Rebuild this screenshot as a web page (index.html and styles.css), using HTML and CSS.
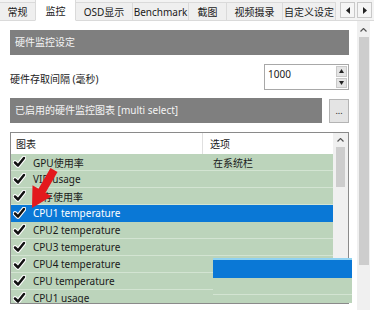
FILE: index.html
```html
<!DOCTYPE html>
<html>
<head>
<meta charset="utf-8">
<link rel="stylesheet" href="styles.css">
</head>
<body>
<div class="window">
  <div class="tabs">
    <div class="tab w35">常规</div>
    <div class="tab active w41">监控</div>
    <div class="tab w56">OSD显示</div>
    <div class="tab w56">Benchmark</div>
    <div class="tab w38">截图</div>
    <div class="tab w56">视频摄录</div>
    <div class="tab w54 last">自定义设定</div>
    <div class="tab-arrows">
      <div class="tab-arrow"><svg width="6" height="7" viewBox="0 0 6 7"><path d="M5 0 L1 3.5 L5 7 Z" fill="#222"/></svg></div>
      <div class="tab-arrow"><svg width="6" height="7" viewBox="0 0 6 7"><path d="M1 0 L5 3.5 L1 7 Z" fill="#222"/></svg></div>
    </div>
  </div>
  <div class="body">
    <div class="content">
      <div class="section-head">硬件监控设定</div>
      <div class="field-row">
        <div class="field-label">硬件存取间隔 (毫秒)</div>
        <div class="spin">
          <div class="spin-value">1000</div>
          <div class="spin-btns">
            <div class="spin-btn"><svg width="5" height="4" viewBox="0 0 5 4"><path d="M0 4 L2.5 0 L5 4 Z" fill="#222"/></svg></div>
            <div class="spin-btn"><svg width="5" height="4" viewBox="0 0 5 4"><path d="M0 0 L2.5 4 L5 0 Z" fill="#222"/></svg></div>
          </div>
        </div>
      </div>
      <div class="head-row">
        <div class="section-head grow">已启用的硬件监控图表 [multi select]</div>
        <div class="dots-btn">...</div>
      </div>
      <div class="list">
        <div class="list-main">
          <div class="list-head">
            <div class="col1">图表</div>
            <div class="col2">选项</div>
          </div>
          <div class="row"><span class="chk"></span><span class="col1">GPU使用率</span><span class="col2">在系统栏</span></div>
          <div class="row"><span class="chk"></span><span class="col1">VID usage</span></div>
          <div class="row"><span class="chk"></span><span class="col1">内存使用率</span></div>
          <div class="row sel"><span class="chk"></span><span class="col1">CPU1 temperature</span></div>
          <div class="row"><span class="chk"></span><span class="col1">CPU2 temperature</span></div>
          <div class="row"><span class="chk"></span><span class="col1">CPU3 temperature</span></div>
          <div class="row"><span class="chk"></span><span class="col1">CPU4 temperature</span></div>
          <div class="row"><span class="chk"></span><span class="col1">CPU temperature</span></div>
          <div class="row"><span class="chk"></span><span class="col1">CPU1 usage</span></div>
        </div>
        <div class="list-scroll">
          <div class="sb-arrow"><svg width="7" height="4" viewBox="0 0 7 4"><path d="M0.5 3.5 L3.5 0.5 L6.5 3.5" fill="none" stroke="#555" stroke-width="1.2"/></svg></div>
          <div class="sb-thumb small"></div>
        </div>
      </div>
    </div>
    <div class="outer-scroll">
      <div class="sb-arrow"><svg width="7" height="4" viewBox="0 0 7 4"><path d="M0.5 3.5 L3.5 0.5 L6.5 3.5" fill="none" stroke="#555" stroke-width="1.2"/></svg></div>
      <div class="sb-thumb big"></div>
    </div>
  </div>
  <div class="artifact">
    <div class="artifact-bar"></div>
    <div class="artifact-row"></div>
    <div class="artifact-row"></div>
  </div>
  <svg class="red-arrow" width="70" height="60" viewBox="0 160 70 60">
    <polygon points="57.5,172 50.5,168 38.5,188.7 32.5,185.2 32,208 51.5,196.2 45.5,192.7" fill="#e3191d"/>
  </svg>
</div>
</body>
</html>
```
FILE: styles.css
```css
* { box-sizing: border-box; }
html, body { margin: 0; padding: 0; background: #fff; }
body {
  font-family: "Noto Sans", "Noto Sans CJK SC", sans-serif;
  font-size: 10px;
  color: #1a1a1a;
}
.window {
  position: relative;
  width: 374px;
  height: 310px;
  overflow: hidden;
  background: #fff;
}
.tabs {
  display: flex;
  align-items: flex-end;
  height: 21px;
  background: #f3f3f3;
  border-bottom: 1px solid #dadada;
}
.tab {
  height: 19px;
  margin-bottom: -1px;
  border: 1px solid #dadada;
  border-right: none;
  background: #efefef;
  display: flex;
  align-items: center;
  justify-content: center;
  white-space: nowrap;
  font-size: 10px;
  color: #1a1a1a;
}
.tab.active {
  height: 22px;
  background: #fff;
  border-bottom: 1px solid #fff;
  border-right: 1px solid #dadada;
}
.tab.active + .tab { border-left: none; }
.tab.last { border-right: 1px solid #dadada; }
.w35 { width: 35px; border-left: none; }
.w41 { width: 41px; }
.w56 { width: 56px; }
.w38 { width: 38px; }
.w54 { width: 54px; }
.tab-arrows {
  display: flex;
  gap: 2px;
  margin-left: 4px;
  align-self: center;
}
.tab-arrow {
  width: 15px;
  height: 16px;
  border: 1px solid #c8c8c8;
  background: #f5f5f5;
  display: flex;
  align-items: center;
  justify-content: center;
}
.body {
  display: flex;
  height: 289px;
}
.content {
  width: 349px;
  padding-left: 10px;
  padding-top: 9px;
}
.section-head {
  height: 25px;
  background: #7f7f7f;
  color: #f4f4f4;
  padding-left: 5px;
  line-height: 25px;
  font-size: 10px;
}
.grow { flex: 1; }
.field-row {
  display: flex;
  align-items: center;
  justify-content: space-between;
  margin-top: 9px;
  height: 26px;
}
.field-label { font-size: 10px; padding-top: 2px; }
.spin {
  width: 85px;
  height: 26px;
  border: 1px solid #a8a8a8;
  background: #fff;
  display: flex;
  justify-content: space-between;
}
.spin-value {
  padding: 2px 0 0 3px;
  font-size: 10px;
  line-height: 14px;
}
.spin-btns {
  display: flex;
  flex-direction: column;
  gap: 1px;
  padding: 1px;
}
.spin-btn {
  width: 11px;
  flex: 1;
  background: #e4e4e4;
  border: 1px solid #c9c9c9;
  display: flex;
  align-items: center;
  justify-content: center;
}
.head-row {
  display: flex;
  align-items: stretch;
  gap: 7px;
  margin-top: 8px;
  height: 25px;
}
.dots-btn {
  width: 20px;
  margin-top: 1px;
  background: #e4e4e4;
  border: 1px solid #b4b4b4;
  display: flex;
  align-items: center;
  justify-content: center;
  font-size: 9px;
  line-height: 1;
  padding-bottom: 2px;
}
.list {
  margin-top: 9px;
  height: 172px;
  border: 1px solid #8a8a8a;
  display: flex;
  overflow: hidden;
}
.list-main {
  flex: 1;
  overflow: hidden;
}
.list-head {
  height: 21px;
  display: flex;
  align-items: center;
  background: #fff;
}
.list-head .col1 {
  width: 192px;
  padding-left: 5px;
  height: 100%;
  display: flex;
  align-items: center;
  border-right: 1px solid #e0e0e0;
}
.list-head .col2 { padding-left: 7px; }
.row {
  height: 17px;
  display: flex;
  align-items: center;
  background: #bcd4bb;
  border-bottom: 1px solid #d3e4d2;
  white-space: nowrap;
}
.row.sel { background: #0a78d6; color: #fff; border-bottom-color: #0a78d6; }
.row .chk {
  width: 13px;
  height: 12px;
  margin-left: 2px;
  margin-right: 7px;
  background:
    url("data:image/svg+xml,%3Csvg xmlns='http://www.w3.org/2000/svg' width='13' height='12' viewBox='0 0 13 12'%3E%3Cpath d='M2 6.5 L5 9.5 L11 2' fill='none' stroke='%23fff' stroke-width='4.6' stroke-linecap='round' stroke-linejoin='round'/%3E%3Cpath d='M2 6.5 L5 9.5 L11 2' fill='none' stroke='%23111' stroke-width='2.5' stroke-linecap='round' stroke-linejoin='round'/%3E%3C/svg%3E") no-repeat center;
}
.row .col1 { width: 170px; }
.row .col2 { padding-left: 10px; }
.list-scroll {
  width: 15px;
  background: #f0f0f0;
  display: flex;
  flex-direction: column;
  align-items: center;
}
.sb-arrow {
  height: 14px;
  width: 100%;
  display: flex;
  align-items: center;
  justify-content: center;
}
.sb-thumb { width: 9px; background: #cdcdcd; }
.sb-thumb.small { height: 40px; }
.outer-scroll {
  margin-left: 8px;
  width: 13px;
  background: #f0f0f0;
  display: flex;
  flex-direction: column;
  align-items: center;
  padding-top: 2px;
}
.sb-thumb.big { height: 228px; width: 10px; }
.artifact {
  position: absolute;
  left: 213px;
  top: 258px;
  width: 139px;
  height: 45px;
  background: #bcd4bb;
}
.artifact-bar {
  height: 20px;
  background: #0a78d6;
  border-top: 2px solid #8fd2f2;
}
.artifact-row {
  height: 17px;
  border-bottom: 1px solid #d3e4d2;
}
.red-arrow {
  position: absolute;
  left: 0;
  top: 160px;
}
```
